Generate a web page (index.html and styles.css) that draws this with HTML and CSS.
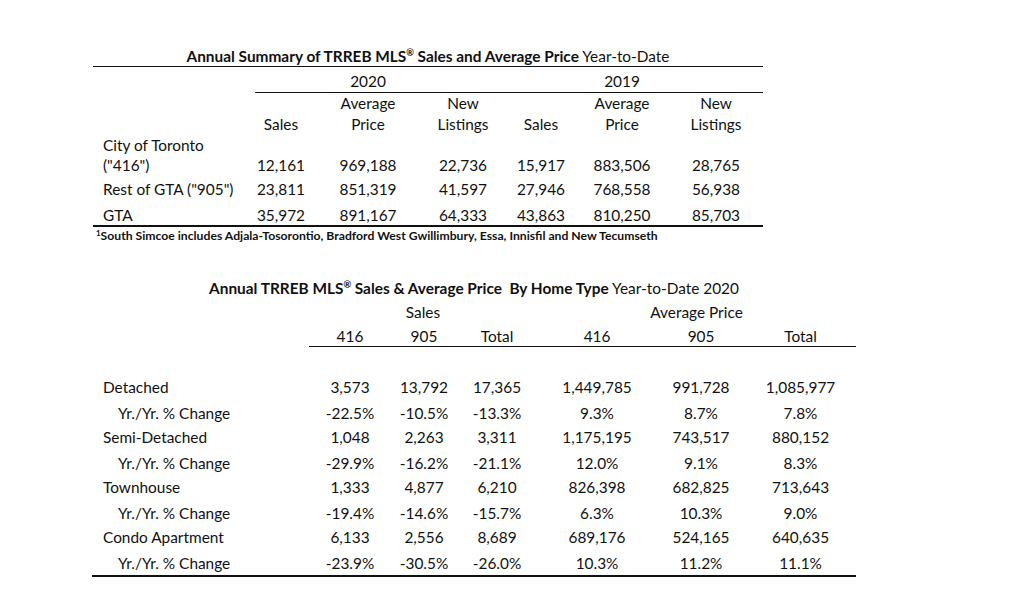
FILE: index.html
```html
<!DOCTYPE html>
<html lang="en">
<head>
<meta charset="utf-8">
<title>TRREB Annual Summary</title>
<link rel="stylesheet" href="styles.css">
</head>
<body>
<div class="page">
  <section class="summary">
    <h1 class="title"><b>Annual Summary of TRREB MLS<sup class="reg">®</sup> Sales and Average Price</b> Year-to-Date</h1>
    <table class="t1">
      <colgroup>
        <col class="w-l1"><col class="w-a"><col class="w-b"><col class="w-c"><col class="w-d"><col class="w-e"><col class="w-f">
      </colgroup>
      <tr class="r-years">
        <td></td><td class="ul"></td><td class="ul">2020</td><td class="ul"></td><td class="ul"></td><td class="ul">2019</td><td class="ul last"></td>
      </tr>
      <tr class="r-head">
        <td></td><td>Sales</td><td>Average<br>Price</td><td>New<br>Listings</td><td>Sales</td><td>Average<br>Price</td><td class="last">New<br>Listings</td>
      </tr>
      <tr class="r-city">
        <td class="lab">City of Toronto<br>("416")</td><td>12,161</td><td>969,188</td><td>22,736</td><td>15,917</td><td>883,506</td><td class="last">28,765</td>
      </tr>
      <tr class="r-rest">
        <td class="lab">Rest of GTA ("905")</td><td>23,811</td><td>851,319</td><td>41,597</td><td>27,946</td><td>768,558</td><td class="last">56,938</td>
      </tr>
      <tr class="r-gta">
        <td class="lab">GTA</td><td>35,972</td><td>891,167</td><td>64,333</td><td>43,863</td><td>810,250</td><td class="last">85,703</td>
      </tr>
    </table>
    <p class="note"><sup class="fn">1</sup>South Simcoe includes Adjala-Tosorontio, Bradford West Gwillimbury, Essa, Innisfil and New Tecumseth</p>
  </section>

  <section class="bytype">
    <h2 class="title2"><b>Annual TRREB MLS<sup class="reg">®</sup> Sales &amp; Average Price&nbsp; By Home Type</b> Year-to-Date 2020</h2>
    <table class="t2">
      <colgroup>
        <col class="w-l2"><col class="w-g"><col class="w-h"><col class="w-i"><col class="w-j"><col class="w-k"><col class="w-m">
      </colgroup>
      <tr class="r-group">
        <td></td><td colspan="3">Sales</td><td colspan="3">Average Price</td>
      </tr>
      <tr class="r-cols">
        <td></td><td class="ul">416</td><td class="ul">905</td><td class="ul">Total</td><td class="ul">416</td><td class="ul">905</td><td class="ul">Total</td>
      </tr>
      <tr class="r-gap"><td colspan="7"></td></tr>
      <tr class="r-data r-main">
        <td class="lab">Detached</td><td>3,573</td><td>13,792</td><td>17,365</td><td>1,449,785</td><td>991,728</td><td>1,085,977</td>
      </tr>
      <tr class="r-data">
        <td class="lab sub">Yr./Yr. % Change</td><td>-22.5%</td><td>-10.5%</td><td>-13.3%</td><td>9.3%</td><td>8.7%</td><td>7.8%</td>
      </tr>
      <tr class="r-data r-main">
        <td class="lab">Semi-Detached</td><td>1,048</td><td>2,263</td><td>3,311</td><td>1,175,195</td><td>743,517</td><td>880,152</td>
      </tr>
      <tr class="r-data">
        <td class="lab sub">Yr./Yr. % Change</td><td>-29.9%</td><td>-16.2%</td><td>-21.1%</td><td>12.0%</td><td>9.1%</td><td>8.3%</td>
      </tr>
      <tr class="r-data r-main">
        <td class="lab">Townhouse</td><td>1,333</td><td>4,877</td><td>6,210</td><td>826,398</td><td>682,825</td><td>713,643</td>
      </tr>
      <tr class="r-data">
        <td class="lab sub">Yr./Yr. % Change</td><td>-19.4%</td><td>-14.6%</td><td>-15.7%</td><td>6.3%</td><td>10.3%</td><td>9.0%</td>
      </tr>
      <tr class="r-data r-main">
        <td class="lab">Condo Apartment</td><td>6,133</td><td>2,556</td><td>8,689</td><td>689,176</td><td>524,165</td><td>640,635</td>
      </tr>
      <tr class="r-data r-final">
        <td class="lab sub">Yr./Yr. % Change</td><td>-23.9%</td><td>-30.5%</td><td>-26.0%</td><td>10.3%</td><td>11.2%</td><td>11.1%</td>
      </tr>
    </table>
  </section>
</div>
</body>
</html>
```

FILE: styles.css
```css
html, body {
  margin: 0;
  padding: 0;
  background: #ffffff;
}

body {
  font-family: Lato, "Open Sans", "Liberation Sans", sans-serif;
  font-size: 15.4px;
  color: #111111;
}

.page {
  padding-top: 46px;
}

/* ---------- Top summary table ---------- */
.summary {
  margin-left: 93px;
  width: 670px;
}

.title {
  margin: 0;
  font-size: 15.4px;
  font-weight: 400;
  line-height: 20px;
  text-align: center;
  border-bottom: 1px solid #111;
}

.title b, .title2 b {
  font-weight: 700;
}

.reg {
  font-size: 0.6em;
  vertical-align: 0.6em;
  line-height: 0;
}

.t1, .t2 {
  table-layout: fixed;
  border-collapse: collapse;
}

.t1 {
  width: 670px;
}

.t1 td, .t2 td {
  padding: 0;
  line-height: 20px;
  text-align: center;
  white-space: nowrap;
}

.w-l1 { width: 162px; }
.w-a { width: 52px; }
.w-b { width: 122px; }
.w-c { width: 68px; }
.w-d { width: 88px; }
.w-e { width: 74px; }
.w-f { width: 104px; }

.t1 td.last {
  padding-left: 10px;
}

.t1 td.lab,
.t2 td.lab {
  text-align: left;
  padding-left: 10px;
}

.t1 .ul,
.t2 .ul {
  border-bottom: 1px solid #111;
}

.r-years td {
  padding-top: 4px;
  padding-bottom: 1px;
}

.r-head td {
  line-height: 21px;
  padding-top: 0;
  vertical-align: bottom;
}

.r-city td {
  vertical-align: bottom;
  padding-bottom: 2px;
}

.r-rest td {
  padding-top: 2px;
  padding-bottom: 2px;
}

.r-gta td {
  padding-top: 4px;
  padding-bottom: 0;
  border-bottom: 2px solid #111;
}

.note {
  margin: 1px 0 0 3px;
  font-size: 12.2px;
  font-weight: 700;
  line-height: 16px;
  white-space: nowrap;
}

.fn {
  font-size: 0.65em;
  vertical-align: 0.55em;
  line-height: 0;
}

/* ---------- Home type table ---------- */
.bytype {
  margin-left: 92px;
  margin-top: 34px;
  width: 764px;
}

.title2 {
  margin: 0;
  font-size: 15.4px;
  font-weight: 400;
  line-height: 20px;
  text-align: center;
}

.t2 {
  width: 764px;
}

.w-l2 { width: 217px; }
.w-g { width: 82px; }
.w-h { width: 66px; }
.w-i { width: 80px; }
.w-j { width: 120px; }
.w-k { width: 88px; }
.w-m { width: 111px; }

.r-group td {
  padding-top: 4px;
}

.r-cols td {
  padding-top: 4px;
}

.r-gap td {
  height: 29px;
}

.r-data td {
  padding-top: 2px;
  padding-bottom: 3px;
}

.r-main td {
  padding-top: 1px;
  padding-bottom: 4px;
}

.t2 td.lab {
  padding-left: 11px;
}

.t2 td.sub {
  padding-left: 26px;
}

.r-final td {
  padding-bottom: 2px;
  border-bottom: 2px solid #111;
}
```
